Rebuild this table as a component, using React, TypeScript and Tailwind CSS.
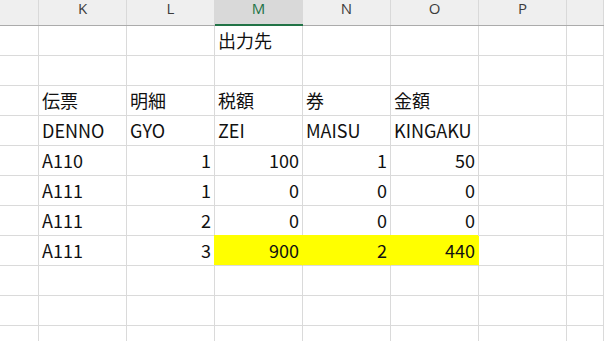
import React from 'react';

type Cell = string | number | null;

const columns = ['', 'K', 'L', 'M', 'N', 'O', 'P', ''];

// sheet contents, one array per row (columns J..Q)
const rows: Cell[][] = [
  [null, null, null, '出力先', null, null, null, null],
  [null, null, null, null, null, null, null, null],
  [null, '伝票', '明細', '税額', '券', '金額', null, null],
  [null, 'DENNO', 'GYO', 'ZEI', 'MAISU', 'KINGAKU', null, null],
  [null, 'A110', 1, 100, 1, 50, null, null],
  [null, 'A111', 1, 0, 0, 0, null, null],
  [null, 'A111', 2, 0, 0, 0, null, null],
  [null, 'A111', 3, 900, 2, 440, null, null],
  [null, null, null, null, null, null, null, null],
  [null, null, null, null, null, null, null, null],
  [null, null, null, null, null, null, null, null],
];

// cells with a yellow fill: "row-col"
const filled = new Set(['7-3', '7-4', '7-5']);

const colWidth = (i: number) =>
  i === 0 ? 'w-[39px]' : i === columns.length - 1 ? 'flex-1' : 'w-[88px]';

const App = () => {
  return (
    <div
      className="h-[341px] w-[604px] overflow-hidden bg-white"
      style={{ fontFamily: '"Noto Sans CJK JP", "Noto Sans", sans-serif' }}
    >
      {/* column header strip */}
      <div className="flex h-[26px] border-b border-[#ababab] bg-[#efefef]">
        {columns.map((c, i) => (
          <div
            key={i}
            className={`${colWidth(i)} relative flex shrink-0 justify-center border-r border-[#d9d9d9] pt-[2px] text-[15px] leading-[16px] ${
              c === 'M' ? 'bg-[#d9d9d9] text-[#217346]' : 'text-[#3c3c3c]'
            }`}
            style={{ fontFamily: '"Open Sans", "Liberation Sans", sans-serif' }}
          >
            <span className="-mt-[2px]">{c}</span>
            {c === 'M' && (
              <span className="absolute -bottom-px left-0 right-[-1px] h-[2px] bg-[#217346]" />
            )}
          </div>
        ))}
      </div>

      {rows.map((row, r) => (
        <div key={r} className="flex h-[30px]">
          {row.map((v, c) => {
            const fill = filled.has(`${r}-${c}`);
            return (
              <div
                key={c}
                className={`${colWidth(c)} flex shrink-0 items-center border-b border-r border-[#dadada] pb-px text-[18px] leading-[29px] text-[#111] ${
                  typeof v === 'number' ? 'justify-end pr-[3px]' : 'pl-[3px]'
                } ${fill ? 'border-r-[#ffff00] bg-[#ffff00] shadow-[-1px_-1px_0_0_#ffff00]' : ''}`}
              >
                {v}
              </div>
            );
          })}
        </div>
      ))}
    </div>
  );
};

export default App;
